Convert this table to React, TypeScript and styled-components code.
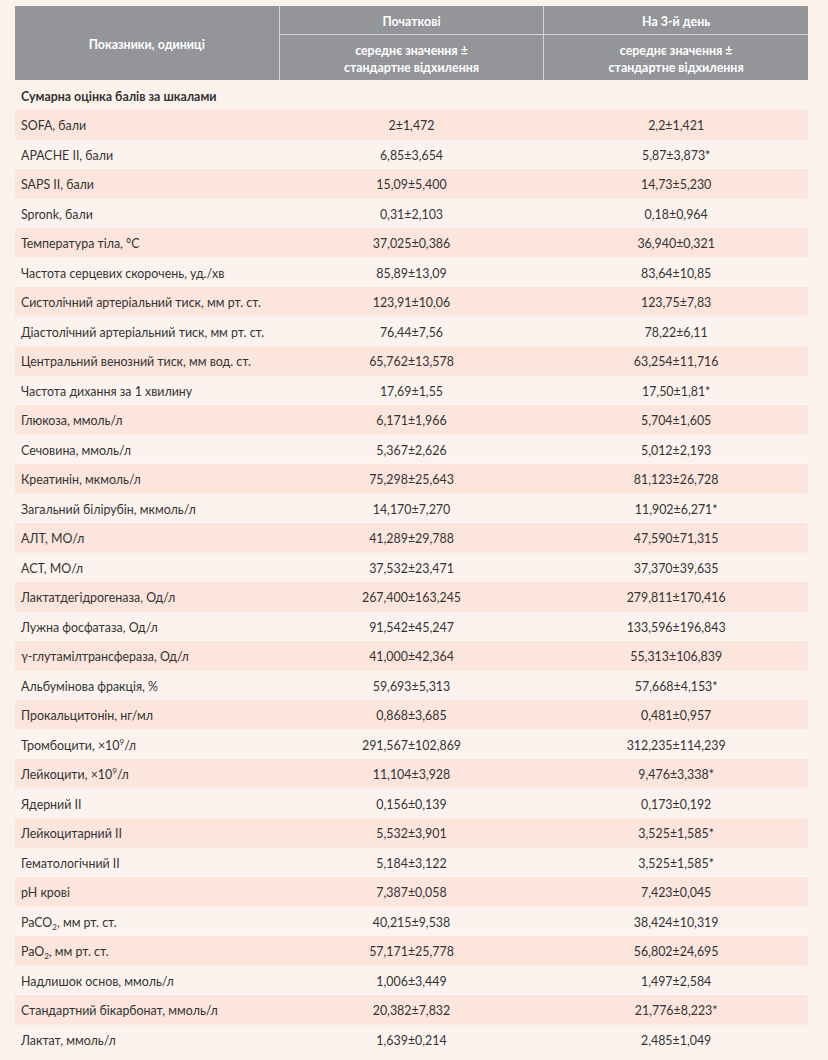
import React from "react";
import styled, { createGlobalStyle } from "styled-components";

const GlobalStyle = createGlobalStyle`
  html, body { margin: 0; padding: 0; background: #fcf2ec; }
  * { box-sizing: border-box; }
`;

const Page = styled.div`
  padding: 6px 0 6px 15px;
  font-family: Lato, "Noto Sans", sans-serif;
  font-size: 12.4px;
  color: #333333;
`;

const Table = styled.div`
  width: 793px;
  display: flex;
  flex-direction: column;
`;

const Header = styled.div`
  display: grid;
  grid-template-columns: 1fr 1fr 1fr;
  grid-template-rows: 28px 45px;
  gap: 1px;
  background: #d3d4d6;
`;

const HeadCell = styled.div<{ $span?: boolean }>`
  background: #939598;
  color: #ffffff;
  font-weight: 700;
  line-height: 17px;
  text-align: center;
  display: flex;
  align-items: center;
  justify-content: center;
  padding-top: 2px;
  grid-row: ${(p) => (p.$span ? "1 / span 2" : "auto")};
`;

const Section = styled.div`
  height: 30px;
  display: flex;
  align-items: center;
  padding: 3px 0 0 6px;
  font-weight: 700;
`;

const Row = styled.div<{ $dark: boolean }>`
  height: 29.5px;
  display: grid;
  grid-template-columns: 1fr 1fr 1fr;
  column-gap: 1px;
  align-items: center;
  padding-top: 3px;
  background: ${(p) => (p.$dark ? "#fbe5dc" : "#fcf3ee")};
  border-bottom: 1px solid ${(p) => (p.$dark ? "#fcebe4" : "#fdf6f2")};
`;

const Label = styled.div`
  padding-left: 6px;
  white-space: nowrap;
`;

const Value = styled.div`
  text-align: center;
  white-space: nowrap;
`;

const Sup = styled.sup`
  font-size: 8px;
  line-height: 0;
  vertical-align: 5px;
`;

const Sub = styled.sub`
  font-size: 8px;
  line-height: 0;
  vertical-align: -3px;
`;

type Item = [React.ReactNode, string, string];

const rows: Item[] = [
  ["SOFA, бали", "2±1,472", "2,2±1,421"],
  ["APACHE II, бали", "6,85±3,654", "5,87±3,873*"],
  ["SAPS II, бали", "15,09±5,400", "14,73±5,230"],
  ["Spronk, бали", "0,31±2,103", "0,18±0,964"],
  ["Температура тіла, °С", "37,025±0,386", "36,940±0,321"],
  ["Частота серцевих скорочень, уд./хв", "85,89±13,09", "83,64±10,85"],
  ["Систолічний артеріальний тиск, мм рт. ст.", "123,91±10,06", "123,75±7,83"],
  ["Діастолічний артеріальний тиск, мм рт. ст.", "76,44±7,56", "78,22±6,11"],
  ["Центральний венозний тиск, мм вод. ст.", "65,762±13,578", "63,254±11,716"],
  ["Частота дихання за 1 хвилину", "17,69±1,55", "17,50±1,81*"],
  ["Глюкоза, ммоль/л", "6,171±1,966", "5,704±1,605"],
  ["Сечовина, ммоль/л", "5,367±2,626", "5,012±2,193"],
  ["Креатинін, мкмоль/л", "75,298±25,643", "81,123±26,728"],
  ["Загальний білірубін, мкмоль/л", "14,170±7,270", "11,902±6,271*"],
  ["АЛТ, МО/л", "41,289±29,788", "47,590±71,315"],
  ["АСТ, МО/л", "37,532±23,471", "37,370±39,635"],
  ["Лактатдегідрогеназа, Од/л", "267,400±163,245", "279,811±170,416"],
  ["Лужна фосфатаза, Од/л", "91,542±45,247", "133,596±196,843"],
  ["γ-глутамілтрансфераза, Од/л", "41,000±42,364", "55,313±106,839"],
  ["Альбумінова фракція, %", "59,693±5,313", "57,668±4,153*"],
  ["Прокальцитонін, нг/мл", "0,868±3,685", "0,481±0,957"],
  [<>Тромбоцити, ×10<Sup>9</Sup>/л</>, "291,567±102,869", "312,235±114,239"],
  [<>Лейкоцити, ×10<Sup>9</Sup>/л</>, "11,104±3,928", "9,476±3,338*"],
  ["Ядерний ІІ", "0,156±0,139", "0,173±0,192"],
  ["Лейкоцитарний ІІ", "5,532±3,901", "3,525±1,585*"],
  ["Гематологічний ІІ", "5,184±3,122", "3,525±1,585*"],
  ["pH крові", "7,387±0,058", "7,423±0,045"],
  [<>PaCO<Sub>2</Sub>, мм рт. ст.</>, "40,215±9,538", "38,424±10,319"],
  [<>PaO<Sub>2</Sub>, мм рт. ст.</>, "57,171±25,778", "56,802±24,695"],
  ["Надлишок основ, ммоль/л", "1,006±3,449", "1,497±2,584"],
  ["Стандартний бікарбонат, ммоль/л", "20,382±7,832", "21,776±8,223*"],
  ["Лактат, ммоль/л", "1,639±0,214", "2,485±1,049"],
];

export default function App() {
  return (
    <>
      <GlobalStyle />
      <Page>
        <Table>
          <Header>
            <HeadCell $span>Показники, одиниці</HeadCell>
            <HeadCell>Початкові</HeadCell>
            <HeadCell>На 3-й день</HeadCell>
            <HeadCell>
              середнє значення ±<br />
              стандартне відхилення
            </HeadCell>
            <HeadCell>
              середнє значення ±<br />
              стандартне відхилення
            </HeadCell>
          </Header>
          <Section>Сумарна оцінка балів за шкалами</Section>
          {rows.map(([label, a, b], i) => (
            <Row key={i} $dark={i % 2 === 0}>
              <Label>{label}</Label>
              <Value>{a}</Value>
              <Value>{b}</Value>
            </Row>
          ))}
        </Table>
      </Page>
    </>
  );
}
